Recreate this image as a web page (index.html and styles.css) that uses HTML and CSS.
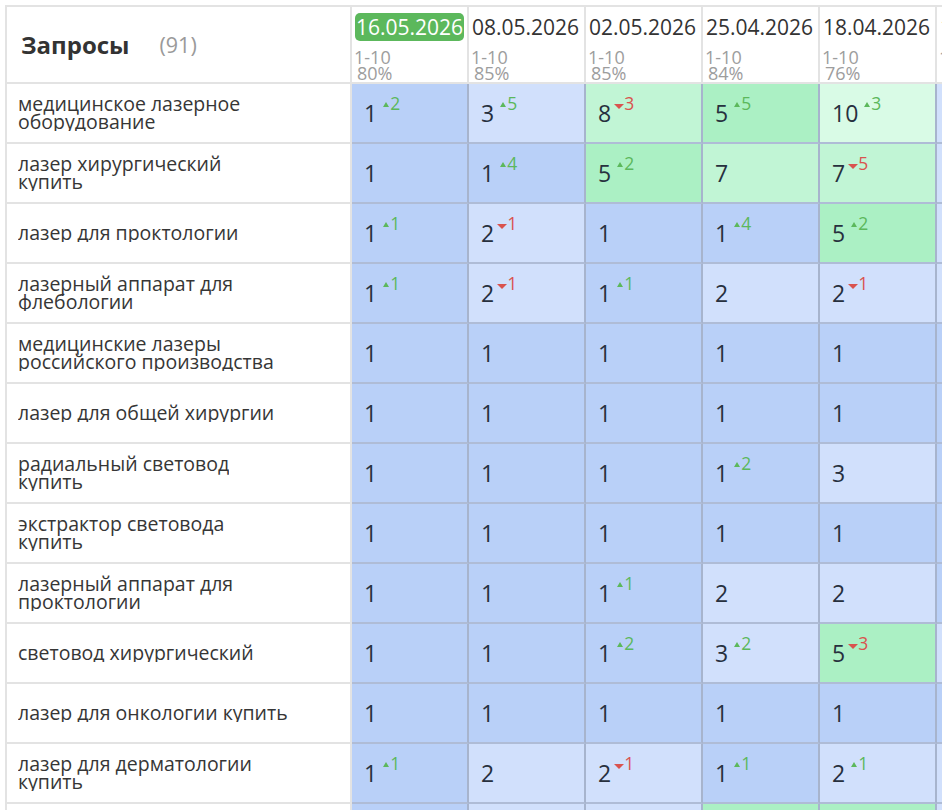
FILE: index.html
```html
<!DOCTYPE html>
<html lang="ru">
<head>
<meta charset="utf-8">
<title>Запросы</title>
<link rel="stylesheet" href="styles.css">
</head>
<body>
<div class="page">
  <div class="table">
    <div class="hq"><span class="title">Запросы</span><span class="count">(91)</span></div>
    <div class="hd"><div class="date now">16.05.2026</div><div class="sub rng">1-10</div><div class="sub pct">80%</div></div>
    <div class="hd"><div class="date">08.05.2026</div><div class="sub rng">1-10</div><div class="sub pct">85%</div></div>
    <div class="hd"><div class="date">02.05.2026</div><div class="sub rng">1-10</div><div class="sub pct">85%</div></div>
    <div class="hd"><div class="date">25.04.2026</div><div class="sub rng">1-10</div><div class="sub pct">84%</div></div>
    <div class="hd"><div class="date">18.04.2026</div><div class="sub rng">1-10</div><div class="sub pct">76%</div></div>
    <div class="hd"><div class="date">11.04.2026</div><div class="sub rng">1-10</div><div class="sub pct">80%</div></div>

    <div class="q"><div class="qt">медицинское лазерное<br>оборудование</div></div>
    <div class="c c1"><div class="num">1<span class="d up">2</span></div></div>
    <div class="c c2"><div class="num">3<span class="d up">5</span></div></div>
    <div class="c c7"><div class="num">8<span class="d dn">3</span></div></div>
    <div class="c c5"><div class="num">5<span class="d up">5</span></div></div>
    <div class="c c10"><div class="num">10<span class="d up">3</span></div></div>
    <div class="c c2"></div>

    <div class="q"><div class="qt">лазер хирургический<br>купить</div></div>
    <div class="c c1"><div class="num">1</div></div>
    <div class="c c1"><div class="num">1<span class="d up">4</span></div></div>
    <div class="c c5"><div class="num">5<span class="d up">2</span></div></div>
    <div class="c c7"><div class="num">7</div></div>
    <div class="c c7"><div class="num">7<span class="d dn">5</span></div></div>
    <div class="c c2"></div>

    <div class="q"><div class="qt">лазер для проктологии</div></div>
    <div class="c c1"><div class="num">1<span class="d up">1</span></div></div>
    <div class="c c2"><div class="num">2<span class="d dn">1</span></div></div>
    <div class="c c1"><div class="num">1</div></div>
    <div class="c c1"><div class="num">1<span class="d up">4</span></div></div>
    <div class="c c5"><div class="num">5<span class="d up">2</span></div></div>
    <div class="c c2"></div>

    <div class="q"><div class="qt">лазерный аппарат для<br>флебологии</div></div>
    <div class="c c1"><div class="num">1<span class="d up">1</span></div></div>
    <div class="c c2"><div class="num">2<span class="d dn">1</span></div></div>
    <div class="c c1"><div class="num">1<span class="d up">1</span></div></div>
    <div class="c c2"><div class="num">2</div></div>
    <div class="c c2"><div class="num">2<span class="d dn">1</span></div></div>
    <div class="c c2"></div>

    <div class="q"><div class="qt">медицинские лазеры<br>российского производства</div></div>
    <div class="c c1"><div class="num">1</div></div>
    <div class="c c1"><div class="num">1</div></div>
    <div class="c c1"><div class="num">1</div></div>
    <div class="c c1"><div class="num">1</div></div>
    <div class="c c1"><div class="num">1</div></div>
    <div class="c c1"></div>

    <div class="q"><div class="qt">лазер для общей хирургии</div></div>
    <div class="c c1"><div class="num">1</div></div>
    <div class="c c1"><div class="num">1</div></div>
    <div class="c c1"><div class="num">1</div></div>
    <div class="c c1"><div class="num">1</div></div>
    <div class="c c1"><div class="num">1</div></div>
    <div class="c c1"></div>

    <div class="q"><div class="qt">радиальный световод<br>купить</div></div>
    <div class="c c1"><div class="num">1</div></div>
    <div class="c c1"><div class="num">1</div></div>
    <div class="c c1"><div class="num">1</div></div>
    <div class="c c1"><div class="num">1<span class="d up">2</span></div></div>
    <div class="c c2"><div class="num">3</div></div>
    <div class="c c1"></div>

    <div class="q"><div class="qt">экстрактор световода<br>купить</div></div>
    <div class="c c1"><div class="num">1</div></div>
    <div class="c c1"><div class="num">1</div></div>
    <div class="c c1"><div class="num">1</div></div>
    <div class="c c1"><div class="num">1</div></div>
    <div class="c c1"><div class="num">1</div></div>
    <div class="c c1"></div>

    <div class="q"><div class="qt">лазерный аппарат для<br>проктологии</div></div>
    <div class="c c1"><div class="num">1</div></div>
    <div class="c c1"><div class="num">1</div></div>
    <div class="c c1"><div class="num">1<span class="d up">1</span></div></div>
    <div class="c c2"><div class="num">2</div></div>
    <div class="c c2"><div class="num">2</div></div>
    <div class="c c1"></div>

    <div class="q"><div class="qt">световод хирургический</div></div>
    <div class="c c1"><div class="num">1</div></div>
    <div class="c c1"><div class="num">1</div></div>
    <div class="c c1"><div class="num">1<span class="d up">2</span></div></div>
    <div class="c c2"><div class="num">3<span class="d up">2</span></div></div>
    <div class="c c5"><div class="num">5<span class="d dn">3</span></div></div>
    <div class="c c2"></div>

    <div class="q"><div class="qt">лазер для онкологии купить</div></div>
    <div class="c c1"><div class="num">1</div></div>
    <div class="c c1"><div class="num">1</div></div>
    <div class="c c1"><div class="num">1</div></div>
    <div class="c c1"><div class="num">1</div></div>
    <div class="c c1"><div class="num">1</div></div>
    <div class="c c1"></div>

    <div class="q"><div class="qt">лазер для дерматологии<br>купить</div></div>
    <div class="c c1"><div class="num">1<span class="d up">1</span></div></div>
    <div class="c c2"><div class="num">2</div></div>
    <div class="c c2"><div class="num">2<span class="d dn">1</span></div></div>
    <div class="c c1"><div class="num">1<span class="d up">1</span></div></div>
    <div class="c c2"><div class="num">2<span class="d up">1</span></div></div>
    <div class="c c2"></div>

    <div class="q"></div>
    <div class="c c1"></div>
    <div class="c c2"></div>
    <div class="c c2"></div>
    <div class="c c5"></div>
    <div class="c c5"></div>
    <div class="c c2"></div>
  </div>
</div>
</body>
</html>
```

FILE: styles.css
```css
html, body {
  margin: 0;
  padding: 0;
  background: #ffffff;
  overflow: hidden;
}

body {
  font-family: "Open Sans", "Noto Sans", "DejaVu Sans", sans-serif;
  width: 942px;
  height: 810px;
}

.page {
  box-sizing: border-box;
  width: 942px;
  height: 810px;
  padding: 5px 0 0 5px;
  overflow: hidden;
}

.table {
  display: grid;
  grid-template-columns: 345px repeat(6, 117px);
  grid-template-rows: 77px;
  grid-auto-rows: 60px;
  width: max-content;
  border-top: 2px solid #e3e3e3;
  border-left: 2px solid #e3e3e3;
}

.table > div {
  box-sizing: border-box;
  min-width: 0;
}

/* header */
.hq {
  display: flex;
  align-items: center;
  padding-left: 14px;
  border-right: 2px solid #e3e3e3;
  border-bottom: 2px solid #e3e3e3;
}

.title {
  font-size: 24px;
  font-weight: 700;
  color: #333333;
}

.count {
  font-size: 21.5px;
  color: #9a9a9a;
  margin-left: 30px;
}

.hd {
  padding: 6px 0 0 3px;
  border-right: 2px solid #e3e3e3;
  border-bottom: 2px solid #e3e3e3;
  overflow: hidden;
  white-space: nowrap;
}

.date {
  font-size: 21px;
  line-height: 28px;
  color: #333333;
}

.date.now {
  display: inline-block;
  background: #5cb85c;
  color: #ffffff;
  border-radius: 5px;
  padding: 0 1px;
}

.sub {
  font-size: 18px;
  line-height: 16px;
  color: #9d9d9d;
}

.rng {
  margin-top: 8px;
  margin-left: -1px;
}

.pct {
  padding-left: 2px;
}

/* query column */
.q {
  display: flex;
  align-items: center;
  padding-left: 11px;
  border-right: 2px solid #e3e3e3;
  border-bottom: 2px solid #e3e3e3;
}

.qt {
  font-size: 19.5px;
  line-height: 18px;
  color: #363636;
  overflow: hidden;
  white-space: nowrap;
}

/* value cells */
.c {
  display: flex;
  align-items: center;
  padding-left: 12px;
  border-right: 2px solid #a7b4cd;
  border-bottom: 2px solid #afbcd6;
}

.c1 { background: #b9d0f8; }
.c2 { background: #d1e0fc; }
.c5 { background: #abf0c4; }
.c7 { background: #c1f5d5; }
.c10 { background: #d9fbe6; }

.num {
  font-size: 23px;
  line-height: 1;
  height: 23px;
  color: #27303e;
  white-space: nowrap;
}

.d {
  font-size: 17.5px;
  line-height: 0;
  vertical-align: 12px;
  margin-left: 3px;
}

.d::before {
  content: "";
  display: inline-block;
  width: 0;
  height: 0;
}

.d.up {
  color: #5cb85c;
}

.d.up::before {
  border-left: 3px solid transparent;
  border-right: 3px solid transparent;
  border-bottom: 5px solid #5cb85c;
  margin: 0 1px 0 3px;
  vertical-align: 3px;
}

.d.dn {
  color: #d9534f;
}

.d.dn::before {
  border-left: 5px solid transparent;
  border-right: 5px solid transparent;
  border-top: 5px solid #d9534f;
  vertical-align: 1px;
}
```
